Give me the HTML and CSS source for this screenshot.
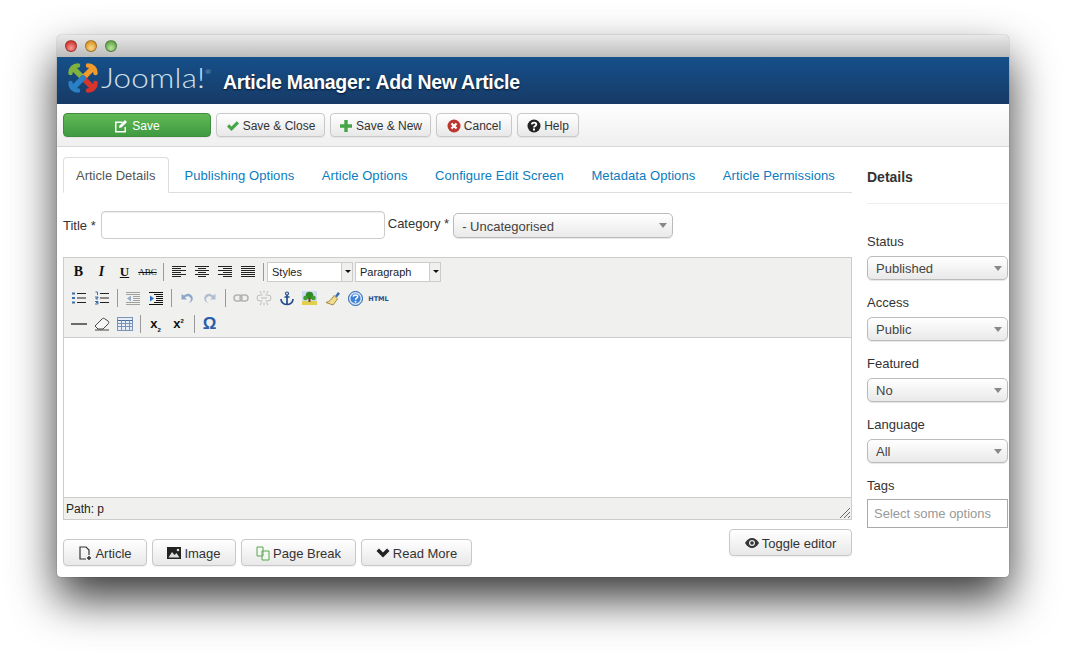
FILE: index.html
```html
<!DOCTYPE html>
<html lang="en">
<head>
<meta charset="utf-8">
<title>Article Manager: Add New Article</title>
<link rel="stylesheet" href="styles.css">
</head>
<body>
<div class="window">
  <div class="titlebar">
    <span class="light red"></span><span class="light amber"></span><span class="light green"></span>
  </div>
  <header class="header">
    <div class="logo">
      <svg class="logo-mark" width="32" height="32" viewBox="0 0 32 32" fill="none" stroke-linecap="round">
        <g stroke="#7fb23e"><path d="M7 7 16 16" stroke-width="5.500"/><path d="M3.500 11C3.500 6.500 6.500 3.500 11 3.500" stroke-width="4.500"/></g>
        <g stroke="#f49a2a" transform="rotate(90 16 16)"><path d="M7 7 16 16" stroke-width="5.500"/><path d="M3.500 11C3.500 6.500 6.500 3.500 11 3.500" stroke-width="4.500"/></g>
        <g stroke="#d8342c" transform="rotate(180 16 16)"><path d="M7 7 16 16" stroke-width="5.500"/><path d="M3.500 11C3.500 6.500 6.500 3.500 11 3.500" stroke-width="4.500"/></g>
        <g stroke="#2a80c5" transform="rotate(270 16 16)"><path d="M7 7 16 16" stroke-width="5.500"/><path d="M3.500 11C3.500 6.500 6.500 3.500 11 3.500" stroke-width="4.500"/></g>
      </svg>
      <span class="logo-text">Joomla!<span class="logo-reg">®</span></span>
    </div>
    <h1 class="page-title">Article Manager: Add New Article</h1>
  </header>
  <nav class="toolbar">
    <a class="btn btn-save">
      <svg width="14" height="14" viewBox="0 0 14 14"><path d="M1 2.500h7.500V4H2.500v8h8V8H12v5.500H1z" fill="#fff"/><path d="M5.500 6.500 11 1l2 2-5.500 5.500-2.500.5z" fill="#fff"/></svg>
      Save
    </a>
    <a class="btn btn-close">
      <svg width="14" height="14" viewBox="0 0 14 14"><path d="M1 7.500 3.200 5.300 5.500 7.600 10.800 2.300 13 4.500 5.500 12z" fill="#46a546"/></svg>
      Save &amp; Close
    </a>
    <a class="btn btn-new">
      <svg width="14" height="14" viewBox="0 0 14 14"><path d="M5.300 1h3.400v4.300H13v3.400H8.700V13H5.300V8.700H1V5.300h4.300z" fill="#46a546"/></svg>
      Save &amp; New
    </a>
    <a class="btn btn-cancel">
      <svg width="14" height="14" viewBox="0 0 14 14"><circle cx="7" cy="7" r="6.500" fill="#bd362f"/><path d="M4.500 4.500l5 5m0-5l-5 5" stroke="#fff" stroke-width="2.200"/></svg>
      Cancel
    </a>
    <a class="btn btn-help">
      <svg width="14" height="14" viewBox="0 0 14 14"><circle cx="7" cy="7" r="6.500" fill="#222"/><path d="M4.800 5.400C5 3 9.300 3 9.300 5.400 9.300 7 7 6.800 7 8.400" fill="none" stroke="#fff" stroke-width="1.800"/><rect x="6" y="9.500" width="2" height="2" fill="#fff"/></svg>
      Help
    </a>
  </nav>
  <div class="content">
    <main class="main">
      <ul class="tabs">
        <li class="tab active">Article Details</li>
        <li class="tab">Publishing Options</li>
        <li class="tab">Article Options</li>
        <li class="tab">Configure Edit Screen</li>
        <li class="tab">Metadata Options</li>
        <li class="tab">Article Permissions</li>
      </ul>
      <div class="title-row">
        <label class="label">Title *</label>
        <div class="input-title"></div>
        <label class="label label-cat">Category *</label>
        <div class="select select-cat">- Uncategorised</div>
      </div>
      <section class="editor">
        <div class="mce-toolbar">
          <div class="mce-row">
            <span class="cell glyph g-b">B</span>
            <span class="cell glyph g-i">I</span>
            <span class="cell glyph g-u">U</span>
            <span class="cell glyph g-s">ABC</span>
            <span class="sep"></span>
            <span class="cell"><svg width="16" height="12" viewBox="0 0 16 12"><path d="M1 .5h14M1 2.500h9M1 4.500h14M1 6.500h9M1 8.500h14M1 10.500h9" stroke="#222"/></svg></span>
            <span class="cell"><svg width="16" height="12" viewBox="0 0 16 12"><path d="M1 .5h14M4 2.500h8M1 4.500h14M4 6.500h8M1 8.500h14M4 10.500h8" stroke="#222"/></svg></span>
            <span class="cell"><svg width="16" height="12" viewBox="0 0 16 12"><path d="M1 .5h14M6 2.500h9M1 4.500h14M6 6.500h9M1 8.500h14M6 10.500h9" stroke="#222"/></svg></span>
            <span class="cell"><svg width="16" height="12" viewBox="0 0 16 12"><path d="M1 .5h14M1 2.500h14M1 4.500h14M1 6.500h14M1 8.500h14M1 10.500h14" stroke="#222"/></svg></span>
            <span class="sep"></span>
            <div class="mce-select mce-styles"><span class="mce-select-text">Styles</span><span class="mce-open"></span></div>
            <div class="mce-select mce-para"><span class="mce-select-text">Paragraph</span><span class="mce-open"></span></div>
          </div>
          <div class="mce-row">
            <span class="cell"><svg width="16" height="14" viewBox="0 0 16 14"><path d="M6 2.500h9M6 7h9M6 11.500h9" stroke="#222"/><path d="M1 1.500h3v2H1zM1 6h3v2H1zM1 10.500h3v2H1z" fill="#3f6ea8"/></svg></span>
            <span class="cell"><svg width="16" height="14" viewBox="0 0 16 14"><path d="M6 2.500h9M6 7h9M6 11.500h9" stroke="#222"/><path d="M1.500 1h2v3M1 6h3v1H2v1h2M1 10.500h3v1H2h2v1.500H1" fill="none" stroke="#3f6ea8"/></svg></span>
            <span class="sep"></span>
            <span class="cell dim"><svg width="16" height="14" viewBox="0 0 16 14"><path d="M1 1.500h14M1 3.500h14M8 5.500h7M8 7.500h7M8 9.500h7M1 11.500h14M1 13.500h14" stroke="#555"/><path d="M6 4.500 2 7.500l4 3z" fill="#3f6ea8"/></svg></span>
            <span class="cell"><svg width="16" height="14" viewBox="0 0 16 14"><path d="M1 1.500h14M6 3.500h9M8 5.500h7M8 7.500h7M8 9.500h7M6 11.500h9M1 13.500h14" stroke="#111"/><path d="M2 4.500 6 7.500l-4 3z" fill="#2d6fc0"/></svg></span>
            <span class="sep"></span>
            <span class="cell dim"><svg width="14" height="14" viewBox="0 0 14 14"><path d="M1.500 3v5.500H7L5 6.500C7 4.500 9.500 5 10.500 7c1 2 0 4-2 5 3 0 5-3 4-6S8 1 4 4.500z" fill="#2f62a8"/></svg></span>
            <span class="cell dim"><svg width="14" height="14" viewBox="0 0 14 14"><path d="M12.500 3v5.500H7l2-2C7 4.500 4.500 5 3.500 7c-1 2 0 4 2 5-3 0-5-3-4-6S6 1 10 4.500z" fill="#6f8fb8"/></svg></span>
            <span class="sep"></span>
            <span class="cell dim"><svg width="16" height="10" viewBox="0 0 16 10"><rect x="1" y="2" width="8" height="6" rx="3" fill="none" stroke="#777" stroke-width="1.500"/><rect x="7" y="2" width="8" height="6" rx="3" fill="none" stroke="#777" stroke-width="1.500"/></svg></span>
            <span class="cell dim"><svg width="16" height="16" viewBox="0 0 16 16"><path d="M6.500 5H4a3 3 0 0 0 0 6h2.500M9.500 5H12a3 3 0 0 1 0 6H9.500M5 8h6M4 1l1.500 2.500M8 .5V3M12 1l-1.500 2.500M4 15l1.500-2.500M8 15.500V13M12 15l-1.500-2.500" fill="none" stroke="#888"/></svg></span>
            <span class="cell"><svg width="14" height="15" viewBox="0 0 14 15"><circle cx="7" cy="2.500" r="1.500" fill="none" stroke="#254f8c" stroke-width="1.200"/><path d="M7 4v9.500M4.500 6h5M1 8c0 3.500 3 5.500 6 5.500S13 11.500 13 8" fill="none" stroke="#254f8c" stroke-width="1.700"/></svg></span>
            <span class="cell"><svg width="15" height="14" viewBox="0 0 15 14"><rect width="15" height="14" fill="#cfdcf0"/><rect y="10" width="15" height="4" fill="#e3cf4e"/><circle cx="7.500" cy="4.500" r="3.800" fill="#2f8a26"/><circle cx="3.500" cy="7" r="2.300" fill="#3f9e30"/><circle cx="11.500" cy="7" r="2.300" fill="#3f9e30"/><rect x="6.500" y="7" width="2" height="4" fill="#6b4a1c"/></svg></span>
            <span class="cell"><svg width="16" height="15" viewBox="0 0 16 15"><path d="M10 5l3-4 2 1.500-3 4z" fill="#3a6fb0"/><path d="M9 4.500 12.500 8 8 14 1 11.500C4 11 7 8 9 4.500z" fill="#f0dc8a" stroke="#8a7430" stroke-width=".8"/></svg></span>
            <span class="cell"><svg width="15" height="15" viewBox="0 0 15 15"><circle cx="7.500" cy="7.500" r="7" fill="#d8e6f6" stroke="#1f5aa8" stroke-width="1"/><circle cx="7.500" cy="7.500" r="5" fill="#3f82d8"/><path d="M5.300 5.800C5.500 3.500 9.700 3.500 9.700 5.800 9.700 7.300 7.500 7.100 7.500 8.800" fill="none" stroke="#fff" stroke-width="1.500"/><rect x="6.700" y="9.800" width="1.700" height="1.700" fill="#fff"/></svg></span>
            <span class="cell glyph g-html">HTML</span>
          </div>
          <div class="mce-row">
            <span class="cell"><svg width="16" height="4" viewBox="0 0 16 4"><path d="M0 2h16" stroke="#111" stroke-width="1.200"/></svg></span>
            <span class="cell"><svg width="16" height="14" viewBox="0 0 16 14"><path d="M1 9 8 2c1-1 2-1 3 0l3 2c1 1 1 2 0 3l-5 5H4z" fill="#f6f6f6" stroke="#444"/><path d="M1 13h14" stroke="#444"/></svg></span>
            <span class="cell"><svg width="16" height="14" viewBox="0 0 16 14"><rect x=".5" y=".5" width="15" height="13" fill="#e6edf7" stroke="#7a93b8"/><path d="M.5 3.500h15" stroke="#4a6d9c"/><path d="M.5 6.500h15M.5 9.500h15M4.500 3.500v10M8.500 3.500v10M12.500 3.500v10" stroke="#7a93b8"/></svg></span>
            <span class="sep"></span>
            <span class="cell g-script">x<sub>2</sub></span>
            <span class="cell g-script">x<sup>2</sup></span>
            <span class="sep"></span>
            <span class="cell glyph g-omega">Ω</span>
          </div>
        </div>
        <div class="mce-body"></div>
        <div class="mce-status">
          Path: p
          <svg class="grip" width="12" height="12" viewBox="0 0 12 12"><path d="M11 1 1 11M11 5 5 11M11 9l-2 2" stroke="#666" fill="none"/></svg>
        </div>
      </section>
      <div class="editor-actions">
        <div class="xtd-buttons">
          <a class="btn btn-tall btn-article">
            <svg width="14" height="15" viewBox="0 0 14 15"><path d="M8 13H2V1h6l3 3v5" fill="none" stroke="#333" stroke-width="1.200"/><path d="M11 10v4M9 12h4" stroke="#333" stroke-width="1.500"/></svg>
            Article
          </a>
          <a class="btn btn-tall btn-image">
            <svg width="14" height="12" viewBox="0 0 14 12"><path d="M0 0h14v12H0z" fill="#222"/><path d="M1.500 10.500 5 5l2.500 3L9.500 6l3 4.500z" fill="#ddd"/><circle cx="11" cy="3" r="1.300" fill="#ddd"/></svg>
            Image
          </a>
          <a class="btn btn-tall btn-break">
            <svg width="14" height="15" viewBox="0 0 14 15"><path d="M1 1h6v9H1zM6 5h7v9H6z" fill="#f6f6f6" stroke="#5aa84f" stroke-width="1"/></svg>
            Page Break
          </a>
          <a class="btn btn-tall btn-more">
            <svg width="14" height="12" viewBox="0 0 14 12"><path d="M.5 4 3 1.500 7 5.500 11 1.500 13.500 4 7 10.500z" fill="#222"/></svg>
            Read More
          </a>
        </div>
        <a class="btn btn-tall btn-toggle">
          <svg width="14" height="10" viewBox="0 0 14 10"><path d="M0 5C2 1.500 4.500 0 7 0s5 1.500 7 5c-2 3.500-4.500 5-7 5S2 8.500 0 5z" fill="#333"/><circle cx="7" cy="5" r="3" fill="#eee"/><circle cx="7" cy="5" r="1.800" fill="#333"/></svg>
          Toggle editor
        </a>
      </div>
    </main>
    <aside class="side">
      <h2 class="side-title">Details</h2>
      <div class="field">
        <label class="side-label">Status</label>
        <div class="select">Published</div>
      </div>
      <div class="field">
        <label class="side-label">Access</label>
        <div class="select">Public</div>
      </div>
      <div class="field">
        <label class="side-label">Featured</label>
        <div class="select">No</div>
      </div>
      <div class="field">
        <label class="side-label">Language</label>
        <div class="select">All</div>
      </div>
      <div class="field">
        <label class="side-label side-label-tags">Tags</label>
        <div class="tags-input">Select some options</div>
      </div>
    </aside>
  </div>
</div>
</body>
</html>
```
FILE: styles.css
```css
* { box-sizing: border-box; }
html, body { margin: 0; padding: 0; background: #fff; }
body {
  height: 656px;
  overflow: hidden;
  padding: 35px 57px 0;
  font-family: "Liberation Sans", Arial, sans-serif;
  font-size: 13px;
  color: #333;
}
.window {
  width: 952px;
  height: 542px;
  background: #fff;
  border-radius: 5px 5px 4px 4px;
  box-shadow: 0 22px 45px rgba(0,0,0,.78), 0 0 1px rgba(0,0,0,.7);
}
.titlebar {
  height: 22px;
  display: flex;
  align-items: center;
  gap: 8px;
  padding-left: 8px;
  border-radius: 5px 5px 0 0;
  background: linear-gradient(#e9e9e9, #bcbcbc);
}
.light { width: 12px; height: 12px; border-radius: 50%; border: 1px solid rgba(0,0,0,.3); }
.light.red { background: radial-gradient(circle at 50% 70%, #f59a95, #d83c36 70%); }
.light.amber { background: radial-gradient(circle at 50% 70%, #fbd98b, #dd9a2c 70%); }
.light.green { background: radial-gradient(circle at 50% 70%, #b9e69c, #67a94e 70%); }
.header {
  height: 47px;
  display: flex;
  background: linear-gradient(#15508a, #173a66);
  color: #fff;
}
.logo { display: flex; align-items: flex-start; padding: 5px 0 0 10px; width: 166px; flex: none; }
.logo-mark { flex: none; }
.logo-text {
  font-family: Lato, "Liberation Sans", sans-serif;
  font-weight: 300;
  font-size: 28px;
  line-height: 30px;
  letter-spacing: .2px;
  color: #cfe0ee;
  margin-left: 2px;
  transform: scaleX(1.12);
  transform-origin: left center;
  white-space: nowrap;
}
.logo-reg { font-size: 6px; line-height: 0; vertical-align: 14px; }
.page-title {
  margin: 0;
  font-size: 19.5px;
  font-weight: bold;
  line-height: 50px;
  letter-spacing: -.3px;
  text-shadow: 0 1px 2px rgba(0,0,0,.7);
}
.toolbar {
  height: 43px;
  display: flex;
  gap: 5px;
  padding: 9px 0 0 6px;
  background: linear-gradient(#fff, #efefef);
  border-bottom: 1px solid #d8d8d8;
}
.btn {
  display: flex;
  align-items: center;
  justify-content: center;
  gap: 3px;
  height: 24px;
  padding: 1px 0 0;
  color: #333;
  font-size: 12px;
  background: linear-gradient(#fff, #e8e8e8);
  border: 1px solid #c8c8c8;
  border-radius: 4px;
  box-shadow: 0 1px 1px rgba(0,0,0,.06);
  white-space: nowrap;
}
.btn-save {
  width: 148px;
  color: #fff;
  background: linear-gradient(#62b955, #3f9a41);
  border-color: #3f8c3f;
  gap: 4px;
}
.btn-close { width: 109px; }
.btn-new { width: 101px; }
.btn-cancel { width: 76px; }
.btn-help { width: 62px; }
.btn-tall { height: 27px; font-size: 13px; }
.btn-article { width: 84px; }
.btn-image { width: 84px; }
.btn-break { width: 115px; }
.btn-more { width: 111px; }
.btn-toggle { width: 123px; }
.content { display: flex; gap: 15px; padding-left: 6px; }
.main { width: 789px; flex: none; }
.tabs {
  display: flex;
  list-style: none;
  margin: 10px 0 0;
  padding: 0;
  height: 36px;
  border-bottom: 1px solid #ddd;
}
.tab {
  padding: 1px 13.5px 0 14px;
  line-height: 36px;
  color: #0a7cc0;
  font-size: 13px;
  letter-spacing: .08px;
  white-space: nowrap;
}
.tab.active {
  padding: 1px 13px 0 12px;
  margin-right: 1px;
  height: 36px;
  color: #555;
  letter-spacing: 0;
  background: #fff;
  border: 1px solid #ddd;
  border-bottom-color: #fff;
  border-radius: 4px 4px 0 0;
  line-height: 34px;
}
.title-row { display: flex; align-items: flex-start; height: 46px; margin-top: 18px; }
.label { line-height: 29px; white-space: nowrap; }
.input-title {
  width: 284px;
  height: 28px;
  margin-left: 5px;
  border: 1px solid #ccc;
  border-radius: 4px;
  box-shadow: inset 0 1px 1px rgba(0,0,0,.07);
}
.label-cat { margin-left: 3px; line-height: 26px; }
.select {
  position: relative;
  height: 24px;
  line-height: 23px;
  padding-left: 8px;
  color: #444;
  border: 1px solid #bbb;
  border-radius: 5px;
  background: linear-gradient(#fff, #e9e9e9);
  box-shadow: 0 1px 1px rgba(0,0,0,.1);
}
.select::after {
  content: "";
  position: absolute;
  right: 5px;
  top: 9px;
  border-left: 4.500px solid transparent;
  border-right: 4.500px solid transparent;
  border-top: 5px solid #888;
}
.select-cat { width: 220px; height: 25px; margin: 2px 0 0 4px; line-height: 25px; }
.editor { height: 263px; border: 1px solid #ccc; display: flex; flex-direction: column; }
.mce-toolbar { height: 79px; padding: 1px 0 0 3px; background: #f0f0ee; }
.mce-row { height: 26px; display: flex; align-items: center; }
.cell { width: 23px; height: 20px; flex: none; display: flex; align-items: center; justify-content: center; }
.dim { opacity: .5; }
.sep { width: 8px; height: 18px; flex: none; position: relative; }
.sep::after { content: ""; position: absolute; left: 4px; top: 0; width: 1px; height: 18px; background: #999; }
.glyph { color: #111; font-weight: bold; }
.g-b { font: bold 14px "Liberation Serif", serif; }
.g-i { font: italic bold 14px "Liberation Serif", serif; }
.g-u { font: bold 13px "Liberation Serif", serif; text-decoration: underline; }
.g-s { font: 9px "Liberation Serif", serif; text-decoration: line-through; }
.g-html { font: bold 6.500px "DejaVu Sans", sans-serif; color: #254f8c; padding-top: 2px; }
.g-script {
  display: block;
  text-align: center;
  font: bold 13px/20px "Liberation Sans", sans-serif;
  color: #111;
}
.g-script sub, .g-script sup { font-size: 6px; line-height: 0; }
.g-omega { font: bold 17px "Liberation Sans", sans-serif; color: #2a5ea8; }
.mce-select {
  height: 20px;
  display: flex;
  flex: none;
  background: #fff;
  border: 1px solid #ccc;
  font-size: 11px;
  color: #222;
}
.mce-styles { width: 86px; }
.mce-para { width: 86px; margin-left: 2px; }
.mce-select-text { flex: 1; padding-left: 4px; line-height: 18px; }
.mce-open { width: 11px; position: relative; background: #f0f0ee; border-left: 1px solid #ccc; }
.mce-open::after {
  content: "";
  position: absolute;
  left: 3px;
  top: 7px;
  border-left: 3px solid transparent;
  border-right: 3px solid transparent;
  border-top: 3px solid #111;
}
.mce-body { height: 161px; background: #fff; border-top: 1px solid #ccc; }
.mce-status {
  position: relative;
  flex: 1;
  padding: 1px 0 0 2px;
  background: #f0f0ee;
  border-top: 1px solid #ccc;
  font-size: 12px;
  line-height: 20px;
  color: #222;
}
.grip { position: absolute; right: 0; bottom: 0; }
.editor-actions { display: flex; justify-content: space-between; align-items: flex-start; margin-top: 9px; }
.xtd-buttons { display: flex; gap: 5px; margin-top: 10px; }
.side { width: 141px; flex: none; }
.side-title {
  margin: 0 0 19px;
  height: 57px;
  padding-top: 22px;
  font-size: 14px;
  line-height: 16px;
  font-weight: bold;
  color: #333;
  border-bottom: 1px solid #eee;
}
.field { height: 61px; padding-top: 10px; }
.side-label { display: block; line-height: 17px; margin-bottom: 6px; }
.side-label-tags { margin-bottom: 5px; }
.tags-input {
  height: 29px;
  line-height: 27px;
  padding-left: 6px;
  color: #999;
  border: 1px solid #aaa;
}
```
